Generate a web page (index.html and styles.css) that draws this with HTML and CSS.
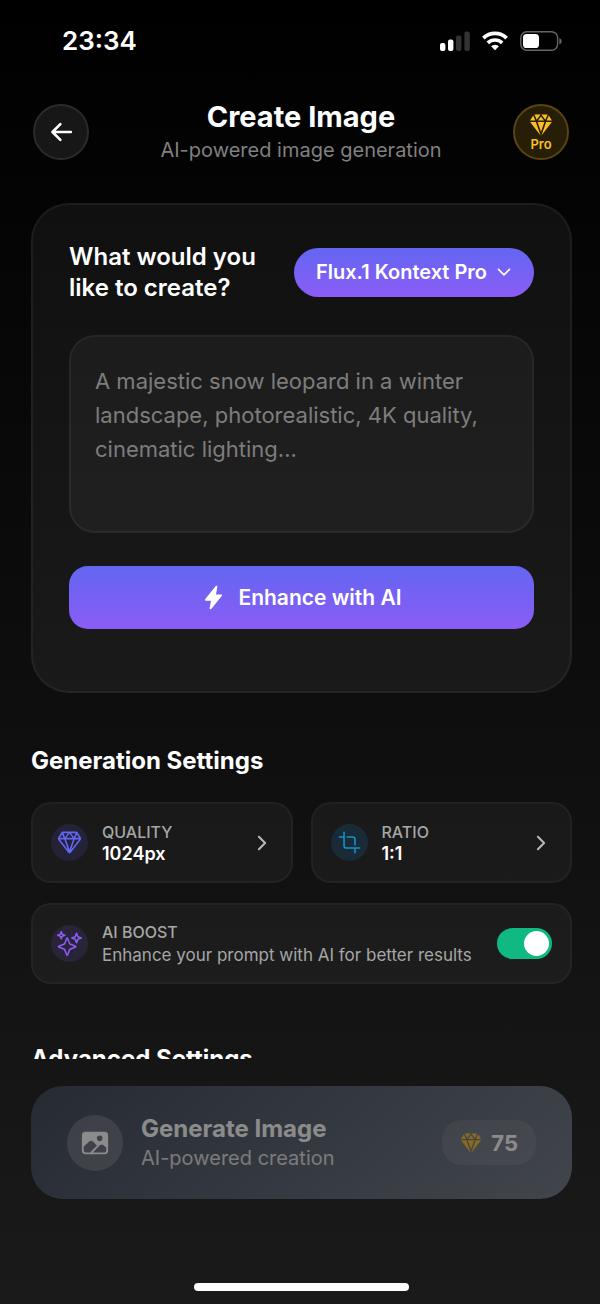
FILE: index.html
```html
<!DOCTYPE html>
<html lang="en">
<head>
<meta charset="utf-8">
<meta name="viewport" content="width=device-width, initial-scale=1">
<title>Create Image</title>
<link rel="stylesheet" href="styles.css">
</head>
<body class="app">
  <div class="status-bar">
    <time class="clock">23:34</time>
    <div class="status-icons">
      <svg width="31" height="20" viewBox="0 0 31 20" aria-hidden="true">
        <rect x="1" y="12" width="5.4" height="8" rx="2" fill="#fff"/>
        <rect x="9" y="8.5" width="5.4" height="11.5" rx="2" fill="#fff"/>
        <rect x="17" y="4.5" width="5.4" height="15.5" rx="2" fill="#333"/>
        <rect x="25.4" y="0.5" width="5.4" height="19.5" rx="2" fill="#333"/>
      </svg>
      <svg width="26" height="20" viewBox="0 0 26 20" fill="none" stroke="#fff" aria-hidden="true">
        <path d="M1.4 7.2a16.5 16.5 0 0 1 23.2 0" stroke-width="3.8"/>
        <path d="M5.8 11.9a10.3 10.3 0 0 1 14.4 0" stroke-width="3.6"/>
        <path d="M13 19.2l-3.9-3.9a5.5 5.5 0 0 1 7.8 0z" fill="#fff" stroke="none"/>
      </svg>
      <svg width="42" height="20" viewBox="0 0 42 20" aria-hidden="true">
        <rect x=".8" y=".8" width="36.8" height="18.4" rx="6" fill="none" stroke="#666" stroke-width="1.4"/>
        <rect x="3" y="3" width="16" height="14" rx="3.6" fill="#fff"/>
        <path d="M39.4 7a3.4 3.4 0 0 1 0 6.4z" fill="#666"/>
      </svg>
    </div>
  </div>

  <header class="header">
    <button class="round-btn" type="button" aria-label="Back">
      <svg width="28" height="28" viewBox="0 0 512 512" fill="none" stroke="currentColor" stroke-width="48" stroke-linecap="round" stroke-linejoin="round" aria-hidden="true"><path d="M244 400L100 256l144-144M120 256h316"/></svg>
    </button>
    <div class="header-text">
      <h1 class="title">Create Image</h1>
      <p class="subtitle">AI-powered image generation</p>
    </div>
    <button class="round-btn pro-btn" type="button">
      <svg width="24" height="24" viewBox="0 0 512 512" fill="currentColor" aria-hidden="true"><path d="M396.31 32H264l84.19 112.26zM115.69 32l48.12 112.26L248 32zM256 74.67L192 160h128zM422.95 51.06L376.26 160H488zM89.05 51.06L23 160h112.74zM146.68 192H24l222.8 288h.53zM365.32 192L264.67 480h.53L488 192zM329.39 192H182.61L256 400z"/></svg>
      <span class="pro-label">Pro</span>
    </button>
  </header>

  <main class="content">
    <section class="prompt-card">
      <div class="prompt-head">
        <h2 class="prompt-title"><label for="prompt">What would you like to create?</label></h2>
        <div class="model">
          <select class="model-select" aria-label="Model"><option>Flux.1 Kontext Pro</option></select>
          <svg class="model-chevron" width="16" height="16" viewBox="0 0 512 512" fill="none" stroke="currentColor" stroke-width="52" stroke-linecap="round" stroke-linejoin="round" aria-hidden="true"><path d="M80 170l176 176 176-176"/></svg>
        </div>
      </div>
      <textarea class="prompt-input" id="prompt" placeholder="A majestic snow leopard in a winter landscape, photorealistic, 4K quality, cinematic lighting..."></textarea>
      <button class="enhance-btn" type="button">
        <svg width="25" height="25" viewBox="0 0 512 512" fill="currentColor" aria-hidden="true"><path d="M194.82 496a18.36 18.36 0 01-18.1-21.53v-.11L204.83 320H96a16 16 0 01-12.44-26.06L302.73 23a18.45 18.45 0 0132.8 13.71c0 .3-.08.59-.13.89L307.19 192H416a16 16 0 0112.44 26.06L209.24 489a18.45 18.45 0 01-14.42 7z"/></svg>
        Enhance with AI
      </button>
    </section>

    <section class="settings">
      <h2 class="section-title">Generation Settings</h2>
      <div class="settings-grid">
        <button class="tile" type="button">
          <span class="tile-icon quality">
            <svg width="25" height="25" viewBox="0 0 512 512" fill="none" stroke="currentColor" stroke-width="32" stroke-linecap="round" stroke-linejoin="round" aria-hidden="true"><path d="M35.42 188.21l207.75 269.46a16.17 16.17 0 0025.66 0l207.75-269.46a16.52 16.52 0 00.95-18.75L407.06 55.71A16.22 16.22 0 00393.27 48H118.73a16.22 16.22 0 00-13.79 7.71L34.47 169.46a16.52 16.52 0 00.95 18.75zM48 176h416M400 64l-48 112-96-128M112 64l48 112 96-128M256 448l-96-272M256 448l96-272"/></svg>
          </span>
          <span class="tile-text"><span class="tile-label">QUALITY</span><span class="tile-value">1024px</span></span>
          <svg class="tile-chevron" width="22" height="22" viewBox="0 0 512 512" fill="none" stroke="currentColor" stroke-width="48" stroke-linecap="round" stroke-linejoin="round" aria-hidden="true"><path d="M184 112l144 144-144 144"/></svg>
        </button>
        <button class="tile" type="button">
          <span class="tile-icon ratio">
            <svg width="25" height="25" viewBox="0 0 512 512" fill="none" stroke="currentColor" stroke-width="32" stroke-linecap="round" stroke-linejoin="round" aria-hidden="true"><path d="M144 48v272a48 48 0 0048 48h272M368 304V192a48 48 0 00-48-48H208M368 368v96M144 144H48"/></svg>
          </span>
          <span class="tile-text"><span class="tile-label">RATIO</span><span class="tile-value">1:1</span></span>
          <svg class="tile-chevron" width="22" height="22" viewBox="0 0 512 512" fill="none" stroke="currentColor" stroke-width="48" stroke-linecap="round" stroke-linejoin="round" aria-hidden="true"><path d="M184 112l144 144-144 144"/></svg>
        </button>
        <label class="tile tile-wide" for="boost">
          <span class="tile-icon boost">
            <svg width="25" height="25" viewBox="0 0 512 512" fill="none" stroke="currentColor" stroke-width="32" stroke-linecap="round" stroke-linejoin="round" aria-hidden="true"><path d="M259.92 262.91L216.4 149.77a9 9 0 00-16.8 0l-43.52 113.14a9 9 0 01-5.17 5.17L37.77 311.6a9 9 0 000 16.8l113.14 43.52a9 9 0 015.17 5.17l43.52 113.14a9 9 0 0016.8 0l43.52-113.14a9 9 0 015.17-5.17l113.14-43.52a9 9 0 000-16.8l-113.14-43.52a9 9 0 01-5.17-5.17zM108 68L88 16 68 68 16 88l52 20 20 52 20-52 52-20-52-20zM426.67 117.33L400 48l-26.67 69.33L304 144l69.33 26.67L400 240l26.67-69.33L496 144l-69.33-26.67z"/></svg>
          </span>
          <span class="tile-text"><span class="tile-label">AI BOOST</span><span class="tile-desc">Enhance your prompt with AI for better results</span></span>
          <input class="switch" id="boost" type="checkbox" role="switch" checked>
        </label>
      </div>
    </section>

    <section class="advanced">
      <h2 class="section-title">Advanced Settings</h2>
    </section>
  </main>

  <footer class="footer">
    <button class="generate-btn" type="button" disabled>
      <span class="generate-icon">
        <svg width="30" height="30" viewBox="0 0 512 512" fill="currentColor" aria-hidden="true"><path d="M416 64H96a64.07 64.07 0 00-64 64v256a64.07 64.07 0 0064 64h320a64.07 64.07 0 0064-64V128a64.07 64.07 0 00-64-64zm-80 64a48 48 0 11-48 48 48.05 48.05 0 0148-48zM96 416a32 32 0 01-32-32v-67.63l94.84-84.3a48.06 48.06 0 0165.8 1.9l64.95 64.81L172.37 416zm352-32a32 32 0 01-32 32H217.63l121.42-121.42a47.72 47.72 0 0161.64-.16L448 333.84z"/></svg>
      </span>
      <span class="generate-text"><span class="generate-title">Generate Image</span><span class="generate-sub">AI-powered creation</span></span>
      <span class="cost">
        <svg width="22" height="22" viewBox="0 0 512 512" fill="#fbbf24" aria-hidden="true"><path d="M396.31 32H264l84.19 112.26zM115.69 32l48.12 112.26L248 32zM256 74.67L192 160h128zM422.95 51.06L376.26 160H488zM89.05 51.06L23 160h112.74zM146.68 192H24l222.8 288h.53zM365.32 192L264.67 480h.53L488 192zM329.39 192H182.61L256 400z"/></svg>
        75
      </span>
    </button>
    <div class="home-indicator"></div>
  </footer>
</body>
</html>
```

FILE: styles.css
```css
* {
  box-sizing: border-box;
  margin: 0;
}

button,
select,
textarea {
  font: inherit;
  color: inherit;
  border: 0;
}

svg {
  flex: none;
}

.app {
  display: flex;
  flex-direction: column;
  height: 100vh;
  overflow: hidden;
  background: linear-gradient(#000, #1a1a1a);
  color: #fff;
  font-family: Inter, "Liberation Sans", sans-serif;
}

.status-bar {
  display: flex;
  flex: none;
  align-items: center;
  justify-content: space-between;
  height: 81px;
  padding: 0 38px 0 62px;
}

.clock {
  font-size: 26px;
  line-height: 32px;
  font-weight: 600;
}

.status-icons {
  display: flex;
  align-items: center;
  gap: 12px;
}

/* Header */
.header {
  display: flex;
  flex: none;
  align-items: center;
  justify-content: space-between;
  padding: 17px 31px 38px 33px;
}

.round-btn {
  display: flex;
  flex-direction: column;
  align-items: center;
  justify-content: center;
  width: 56px;
  height: 56px;
  padding: 0;
  border: 2px solid #2b2b2b;
  border-radius: 50%;
  background: #171717;
}

.pro-btn {
  border-color: #594413;
  background: #271e08;
  color: #fbbf24;
}

.pro-label {
  font-size: 13px;
  line-height: 14px;
  font-weight: 600;
}

.header-text {
  text-align: center;
}

.title {
  font-size: 29px;
  line-height: 38px;
  font-weight: 700;
}

.subtitle {
  color: #808080;
  font-size: 20px;
  line-height: 29px;
}

/* Scrolling content */
.content {
  flex: 1;
  min-height: 0;
  overflow: hidden;
  padding: 0 28px 0 31px;
}

.prompt-card {
  padding: 36px 36px 62px;
  border: 2px solid rgba(255, 255, 255, 0.05);
  border-radius: 38px;
  background: rgba(255, 255, 255, 0.05);
}

.prompt-head {
  display: flex;
  align-items: center;
  justify-content: space-between;
  gap: 16px;
  margin-bottom: 32px;
}

.prompt-title {
  font-size: 24px;
  line-height: 31px;
  font-weight: 600;
}

.model {
  position: relative;
  flex: none;
}

.model-select {
  appearance: none;
  height: 49px;
  padding: 0 46px 0 22px;
  border-radius: 25px;
  background: linear-gradient(#6366f1, #8b5cf6);
  font-size: 20px;
  font-weight: 600;
}

.model-chevron {
  position: absolute;
  top: 16px;
  right: 22px;
  pointer-events: none;
}

.prompt-input {
  display: block;
  width: 100%;
  height: 198px;
  margin-bottom: 33px;
  padding: 27px 24px;
  border: 2px solid rgba(255, 255, 255, 0.05);
  border-radius: 26px;
  background: rgba(255, 255, 255, 0.04);
  font-size: 22px;
  line-height: 34px;
  resize: none;
}

.prompt-input::placeholder {
  color: #7d7d7d;
}

.enhance-btn {
  display: flex;
  align-items: center;
  justify-content: center;
  gap: 12px;
  width: 100%;
  height: 63px;
  border-radius: 19px;
  background: linear-gradient(#6366f1, #8b5cf6);
  font-size: 21px;
  font-weight: 600;
}

/* Settings */
.settings {
  padding: 52px 0 59px;
}

.section-title {
  font-size: 24px;
  line-height: 32px;
  font-weight: 700;
}

.settings-grid {
  display: grid;
  grid-template-columns: 1fr 1fr;
  gap: 20px 18px;
  margin-top: 25px;
}

.tile {
  display: flex;
  align-items: center;
  gap: 14px;
  min-height: 81px;
  padding: 0 18px;
  border: 2px solid rgba(255, 255, 255, 0.04);
  border-radius: 20px;
  background: rgba(255, 255, 255, 0.04);
  text-align: left;
}

.tile-wide {
  grid-column: 1 / -1;
}

.tile-icon {
  display: flex;
  flex: none;
  align-items: center;
  justify-content: center;
  width: 37px;
  height: 37px;
  border-radius: 50%;
}

.quality {
  background: #232236;
  color: #6366f1;
}

.ratio {
  background: #182b36;
  color: #1792cd;
}

.boost {
  background: #2a2438;
  color: #8b5cf6;
}

.tile-text {
  display: flex;
  flex: 1;
  flex-direction: column;
}

.tile-label {
  color: #a6a6a6;
  font-size: 16px;
  line-height: 22px;
  font-weight: 500;
}

.tile-value {
  font-size: 18px;
  line-height: 22px;
  font-weight: 600;
}

.tile-desc {
  color: #a6a6a6;
  font-size: 17px;
  line-height: 24px;
}

.tile-chevron {
  color: #b8b8b8;
}

.switch {
  appearance: none;
  display: flex;
  flex: none;
  align-items: center;
  justify-content: flex-end;
  width: 55px;
  height: 31px;
  margin: 0;
  padding: 3px;
  border-radius: 16px;
  background: #374151;
}

.switch:checked {
  background: #10b981;
}

.switch::before {
  content: "";
  width: 25px;
  height: 25px;
  border-radius: 50%;
  background: #fff;
}

.switch:not(:checked) {
  justify-content: flex-start;
}

/* Bottom action */
.footer {
  display: flex;
  flex: none;
  flex-direction: column;
  align-items: center;
  padding: 27px 28px 13px 31px;
}

.generate-btn {
  display: flex;
  align-items: center;
  gap: 18px;
  width: 100%;
  height: 113px;
  padding: 0 36px;
  border-radius: 32px;
  background: linear-gradient(135deg, #374151, #6b7280);
  color: #fff;
  opacity: 0.5;
  text-align: left;
}

.generate-icon {
  display: flex;
  flex: none;
  align-items: center;
  justify-content: center;
  width: 56px;
  height: 56px;
  border-radius: 50%;
  background: rgba(255, 255, 255, 0.2);
}

.generate-text {
  display: flex;
  flex: 1;
  flex-direction: column;
}

.generate-title {
  font-size: 24px;
  line-height: 30px;
  font-weight: 700;
}

.generate-sub {
  font-size: 20px;
  line-height: 28px;
  opacity: 0.8;
}

.cost {
  display: flex;
  align-items: center;
  gap: 9px;
  height: 45px;
  padding: 0 18px;
  border-radius: 20px;
  background: rgba(255, 255, 255, 0.1);
  font-size: 22px;
  font-weight: 700;
}

.home-indicator {
  width: 215px;
  height: 8px;
  margin-top: 84px;
  border-radius: 4px;
  background: #fff;
}
```
